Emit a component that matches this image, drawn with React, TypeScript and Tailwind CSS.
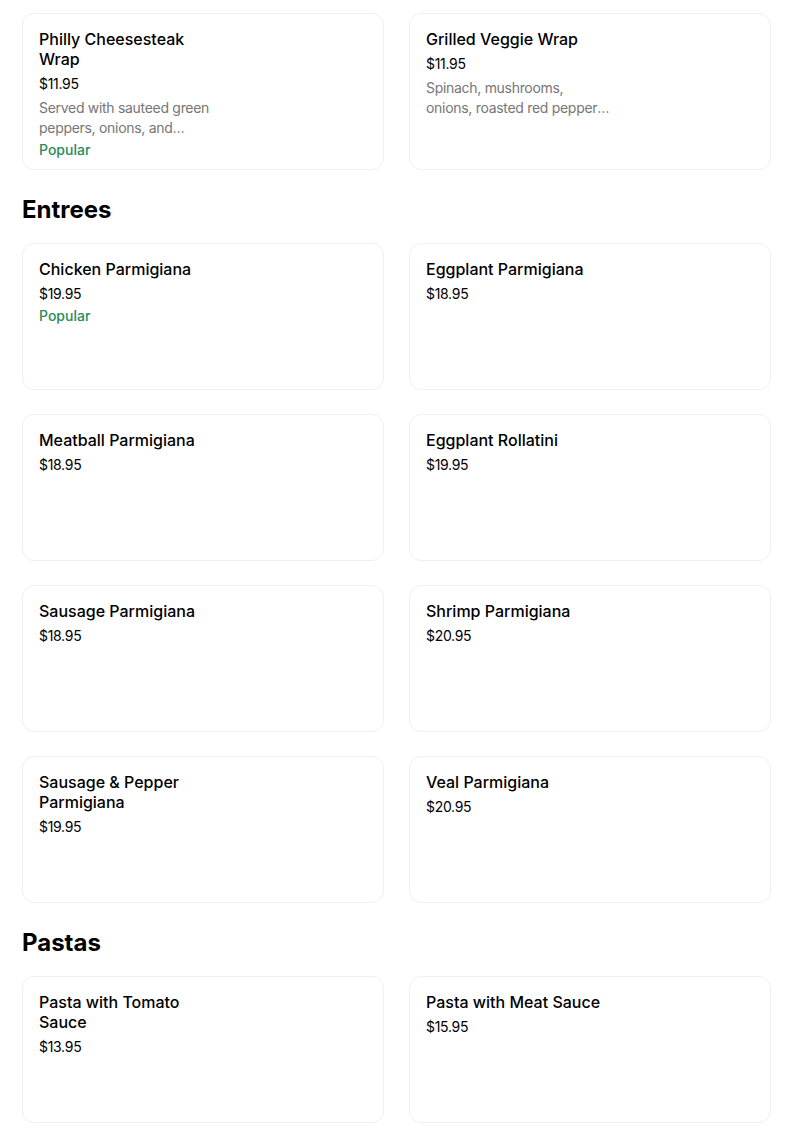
import React from 'react';

type Item = {
  name: string;
  price: string;
  desc?: string;
  popular?: boolean;
};

const wraps: Item[] = [
  {
    name: 'Philly Cheesesteak Wrap',
    price: '$11.95',
    desc: 'Served with sauteed green peppers, onions, and mozzarella cheese',
    popular: true,
  },
  {
    name: 'Grilled Veggie Wrap',
    price: '$11.95',
    desc: 'Spinach, mushrooms, onions, roasted red peppers and mozzarella',
  },
];

const entrees: Item[] = [
  { name: 'Chicken Parmigiana', price: '$19.95', popular: true },
  { name: 'Eggplant Parmigiana', price: '$18.95' },
  { name: 'Meatball Parmigiana', price: '$18.95' },
  { name: 'Eggplant Rollatini', price: '$19.95' },
  { name: 'Sausage Parmigiana', price: '$18.95' },
  { name: 'Shrimp Parmigiana', price: '$20.95' },
  { name: 'Sausage & Pepper Parmigiana', price: '$19.95' },
  { name: 'Veal Parmigiana', price: '$20.95' },
];

const pastas: Item[] = [
  { name: 'Pasta with Tomato Sauce', price: '$13.95' },
  { name: 'Pasta with Meat Sauce', price: '$15.95' },
];

const MenuCard: React.FC<{ item: Item }> = ({ item }) => {
  return (
    <div className="min-h-[147px] rounded-xl border border-[#efefef] bg-white px-4 pt-[15px] pb-[9px]">
      <div className="max-w-[186px]">
        <div className="text-[16px] font-medium leading-5 text-black">{item.name}</div>
        <div className="mt-[5px] text-[14px] leading-5 text-black tracking-[-0.3px]">{item.price}</div>
        {item.desc && (
          <div className="mt-1 text-[14px] leading-5 tracking-[-0.3px] text-[#767676] line-clamp-2">
            {item.desc}
          </div>
        )}
        {item.popular && (
          <div className="mt-[2px] text-[14px] font-medium leading-5 text-[#2b8a57]">Popular</div>
        )}
      </div>
    </div>
  );
};

const Grid: React.FC<{ items: Item[] }> = ({ items }) => (
  <div className="grid grid-cols-2 gap-x-[25px] gap-y-[24px]">
    {items.map((it) => (
      <MenuCard key={it.name} item={it} />
    ))}
  </div>
);

export default function App() {
  return (
    <div
      className="min-h-screen bg-white pl-[22px] pr-[33px] pt-[13px] pb-6"
      style={{ fontFamily: 'Inter, "Noto Sans", sans-serif' }}
    >
      <Grid items={wraps} />

      {/* Entrees */}
      <h2 className="mt-6 mb-[17px] text-[24px] font-bold leading-8 text-black">Entrees</h2>
      <Grid items={entrees} />

      {/* Pastas */}
      <h2 className="mt-6 mb-[17px] text-[24px] font-bold leading-8 text-black">Pastas</h2>
      <Grid items={pastas} />
    </div>
  );
}
